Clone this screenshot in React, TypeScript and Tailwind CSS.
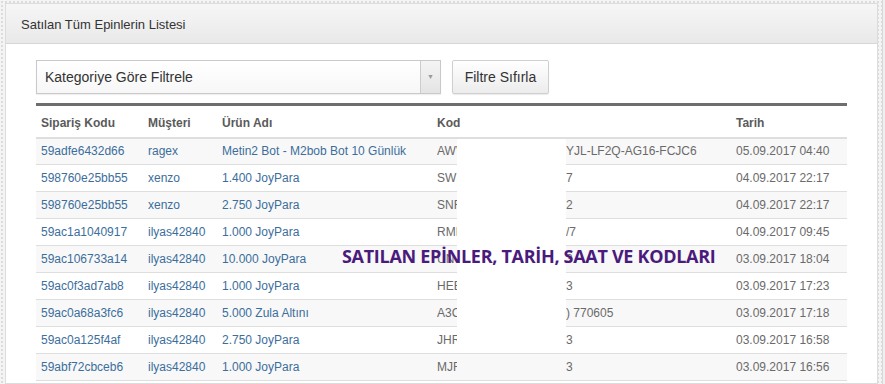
import React from "react";

type Row = {
  id: string;
  user: string;
  product: string;
  codeHead: string;
  codeTail: string;
  date: string;
};

const rows: Row[] = [
  { id: "59adfe6432d66", user: "ragex", product: "Metin2 Bot - M2bob Bot 10 Günlük", codeHead: "AWV", codeTail: "YJL-LF2Q-AG16-FCJC6", date: "05.09.2017 04:40" },
  { id: "598760e25bb55", user: "xenzo", product: "1.400 JoyPara", codeHead: "SWI", codeTail: "7", date: "04.09.2017 22:17" },
  { id: "598760e25bb55", user: "xenzo", product: "2.750 JoyPara", codeHead: "SNF", codeTail: "2", date: "04.09.2017 22:17" },
  { id: "59ac1a1040917", user: "ilyas42840", product: "1.000 JoyPara", codeHead: "RME", codeTail: "/7", date: "04.09.2017 09:45" },
  { id: "59ac106733a14", user: "ilyas42840", product: "10.000 JoyPara", codeHead: "UN", codeTail: "3", date: "03.09.2017 18:04" },
  { id: "59ac0f3ad7ab8", user: "ilyas42840", product: "1.000 JoyPara", codeHead: "HEE", codeTail: "3", date: "03.09.2017 17:23" },
  { id: "59ac0a68a3fc6", user: "ilyas42840", product: "5.000 Zula Altını", codeHead: "A3C", codeTail: ") 770605", date: "03.09.2017 17:18" },
  { id: "59ac0a125f4af", user: "ilyas42840", product: "2.750 JoyPara", codeHead: "JHR", codeTail: "3", date: "03.09.2017 16:58" },
  { id: "59abf72cbceb6", user: "ilyas42840", product: "1.000 JoyPara", codeHead: "MJF", codeTail: "3", date: "03.09.2017 16:56" },
];

export default function App() {
  return (
    <div
      className="flex h-[384px] w-[885px] overflow-hidden bg-[#f4f4f4] bg-[radial-gradient(#dcdcdc_0.8px,transparent_0.8px)] bg-[size:4px_4px] pt-[3px] pl-[5px] font-['Liberation_Sans',Arial,sans-serif]"
    >
      {/* Panel */}
      <div className="w-[873px] shrink-0 border border-[#dcdcdc] bg-white">
        <div className="flex h-[40px] items-center border-b border-[#d6d6d6] bg-gradient-to-b from-[#f6f6f6] to-[#e9e9e9] pl-[15px] pt-[3px] text-[13px] text-[#333]">
          Satılan Tüm Epinlerin Listesi
        </div>

        <div className="relative px-[30px] pt-[16px]">
          {/* Filters */}
          <div className="flex gap-[11px]">
            <div className="flex h-[34px] w-[405px] border border-[#c9c9c9] bg-gradient-to-b from-white to-[#f7f7f7] shadow-[0_1px_1px_rgba(0,0,0,0.06)]">
              <div className="flex flex-1 items-center pl-[8px] text-[14px] text-[#333]">
                Kategoriye Göre Filtrele
              </div>
              <div className="flex w-[20px] items-center justify-center border-l border-[#ccc] bg-gradient-to-b from-[#f4f4f4] to-[#e4e4e4]">
                <span className="text-[7px] text-[#999]">▼</span>
              </div>
            </div>
            <button className="h-[34px] w-[97px] rounded-[2px] border border-[#cfcfcf] bg-gradient-to-b from-white to-[#ececec] text-[14px] text-[#333] shadow-[0_1px_1px_rgba(0,0,0,0.08)]">
              Filtre Sıfırla
            </button>
          </div>

          {/* Table */}
          <table className="mt-[9px] w-[811px] table-fixed border-collapse border-t-[3px] border-[#6e6e6e] text-[12px]">
            <colgroup>
              <col className="w-[112px]" />
              <col className="w-[74px]" />
              <col className="w-[215px]" />
              <col className="w-[299px]" />
              <col className="w-[111px]" />
            </colgroup>
            <thead>
              <tr className="h-[33px] border-b-2 border-[#dedede] text-left font-bold text-[#5a5a5a]">
                <th className="px-[5px] pt-[3px] font-bold">Sipariş Kodu</th>
                <th className="pt-[3px] font-bold">Müşteri</th>
                <th className="pt-[3px] font-bold">Ürün Adı</th>
                <th className="pt-[3px] font-bold">Kod</th>
                <th className="pt-[3px] font-bold">Tarih</th>
              </tr>
            </thead>
            <tbody>
              {rows.map((r, i) => (
                <tr
                  key={i}
                  className={`h-[27px] border-b border-[#dedede] ${i % 2 === 0 ? "bg-[#f8f8f8]" : "bg-white"}`}
                >
                  <td className="px-[5px] text-[#3b6e9c]">{r.id}</td>
                  <td className="text-[#3b6e9c]">{r.user}</td>
                  <td className="whitespace-nowrap text-[#3b6e9c]">{r.product}</td>
                  <td className="whitespace-nowrap text-[#6a6a6a]">
                    <span className="inline-block w-[20px] overflow-hidden align-bottom">{r.codeHead}</span>
                    <span className="inline-block w-[109px]" />
                    <span>{r.codeTail}</span>
                  </td>
                  <td className="whitespace-nowrap text-[#6a6a6a]">{r.date}</td>
                </tr>
              ))}
            </tbody>
          </table>

          {/* redaction box */}
          <div className="absolute left-[451px] top-[95px] h-[210px] w-[109px] bg-white" />

          {/* caption overlay */}
          <div className="absolute left-[336px] top-[199px] whitespace-nowrap font-['Open_Sans',sans-serif] text-[18px] font-bold tracking-[-0.3px] text-[#4a1a7c]">
            SATILAN EPİNLER, TARİH, SAAT VE KODLARI
          </div>
        </div>
      </div>

      {/* right edge strip */}
      <div className="ml-[4px] mt-[-3px] h-[387px] w-[4px] border-l border-[#d8d8d8] bg-[#f0f0f0]" />
    </div>
  );
}
